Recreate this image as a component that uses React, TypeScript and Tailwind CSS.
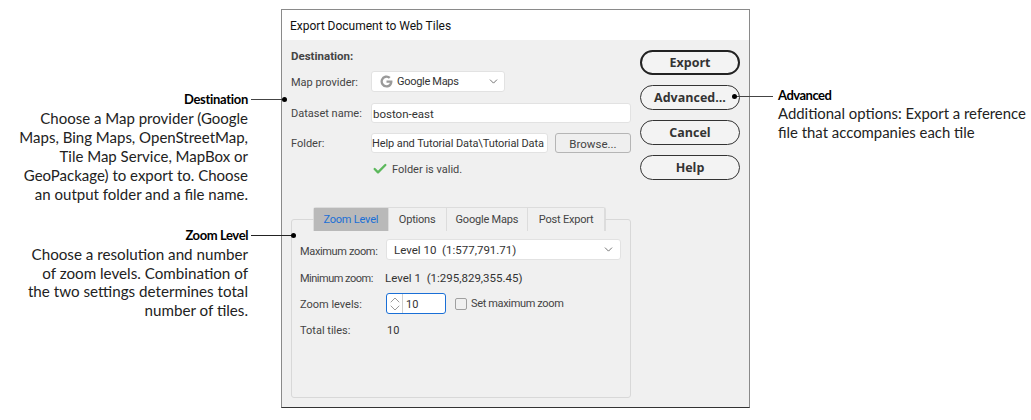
import { Check, ChevronDown, ChevronUp } from "lucide-react";

const dialogFont = "font-['Roboto',sans-serif]";

function Row({ label, className, children }: { label: string; className: string; children: React.ReactNode }) {
  return (
    <div className={`flex items-center ${className}`}>
      <span className="w-[81px] shrink-0 pt-[3px] text-[#444]">{label}</span>
      {children}
    </div>
  );
}

function DarkButton({ label, primary }: { label: string; primary?: boolean }) {
  return (
    <button
      className={`flex h-[25px] w-[100px] items-center justify-center rounded-full bg-[#f3f3f3] pt-px font-['Open_Sans',sans-serif] text-[12.5px] font-bold text-[#333] ${
        primary ? "border-2 border-[#222]" : "border border-[#333]"
      }`}
    >
      {label}
    </button>
  );
}

function Tab({ label, width, active }: { label: string; width: string; active?: boolean }) {
  return (
    <div
      className={`flex h-full items-center justify-center border-r border-[#dcdcdc] pt-[2px] tracking-[-0.2px] ${width} ${
        active ? "bg-[#b9b9b9] text-[#1a6fd6]" : "bg-[#f0f0f0] text-[#444]"
      }`}
    >
      {label}
    </div>
  );
}

function GoogleG() {
  return (
    <svg viewBox="0 0 24 24" className="h-[13px] w-[13px]">
      <path fill="#9a9a9a" d="M12 10v4.400h6.200c-.6 2.600-3 4.400-6.200 4.400a6.800 6.800 0 1 1 4.400-12l3.200-3.200A11.200 11.200 0 1 0 12 23.200c6.200 0 11-4.300 11-11.200 0-.7-.1-1.400-.2-2z" />
    </svg>
  );
}

export default function App() {
  return (
    <div className="relative flex h-[420px] w-[1031px] overflow-hidden bg-white font-['Lato',sans-serif] text-[#222]">
      <div className="w-[281px] shrink-0 pr-[33px] text-right text-[15px] leading-[19px]">
        <div className="mt-[90px] text-[13px] font-bold tracking-[-0.3px] text-black">Destination</div>
        <p>
          Choose a Map provider (Google
          <br />
          Maps, Bing Maps, OpenStreetMap,
          <br />
          Tile Map Service, MapBox or
          <br />
          GeoPackage) to export to. Choose
          <br />
          an output folder and a file name.
        </p>
        <div className="mt-[22px] text-[13px] font-bold tracking-[-0.4px] text-black">Zoom Level</div>
        <p className="text-[15.2px] leading-[18.7px]">
          Choose a resolution and number
          <br />
          of zoom levels. Combination of
          <br />
          the two settings determines total
          <br />
          number of tiles.
        </p>
      </div>

      <div className={`mt-[9px] flex h-[399px] w-[469px] shrink-0 flex-col border border-[#8a8a8a] border-b-[#333] text-[11px] ${dialogFont}`}>
        <div className="flex h-[30px] items-center bg-white pl-[8px] pt-px text-[12px] text-[#111]">Export Document to Web Tiles</div>
        <div className="flex flex-1 bg-[#f0f0f0]">
          <div className="w-[349px] shrink-0 pl-[9px]">
            <div className="mt-[9px] text-[11.5px] font-bold leading-[14px] text-[#444]">Destination:</div>
            <Row label="Map provider:" className="mt-[8px] h-[21px]">
              <div className="-ml-px flex h-full w-[134px] items-center rounded-[3px] border border-[#e2e2e2] bg-white pl-[8px] pr-[4px] text-[#333]">
                <GoogleG />
                <span className="ml-[4px] flex-1 pt-px tracking-[-0.3px]">Google Maps</span>
                <ChevronDown size={13} strokeWidth={1.5} className="text-[#555]" />
              </div>
            </Row>
            <Row label="Dataset name:" className="mt-[11px] h-[20px]">
              <div className="-ml-px flex h-full w-[260px] items-center rounded-[3px] border border-[#e2e2e2] bg-white pl-[1px] pt-[3px] text-[11.5px] text-[#333]">boston-east</div>
            </Row>
            <Row label="Folder:" className="mt-[10px] h-[20px]">
              <div className="-ml-px flex h-full w-[177px] items-center overflow-hidden whitespace-nowrap rounded-[3px] border border-[#e2e2e2] bg-white pt-[3px] tracking-[-0.1px] text-[#333]">
                Help and Tutorial Data\Tutorial Data
              </div>
              <button className="ml-[7px] flex h-full w-[76px] items-center justify-center rounded-[3px] border border-[#b5b5b5] bg-[#efefef] pt-[3px] text-[11.5px] text-[#444]">Browse...</button>
            </Row>
            <div className="mt-[6px] flex h-[20px] items-center pl-[81px] text-[#444]">
              <Check size={16} strokeWidth={3.5} className="text-[#5cb85c]" />
              <span className="ml-[4px] pt-[2px]">Folder is valid.</span>
            </div>

            <div className="mt-[28px] ml-[22px] flex h-[24px] w-[293px] rounded-t-[3px] border border-b-0 border-[#dcdcdc]">
              <Tab label="Zoom Level" width="w-[75px]" active />
              <Tab label="Options" width="w-[58px]" />
              <Tab label="Google Maps" width="w-[82px]" />
              <Tab label="Post Export" width="w-[77px]" />
            </div>
            <div className="-mt-[12px] h-[179px] w-[340px] rounded-[3px] border border-[#d8d8d8] pl-[8px] pt-[19px] text-[#444]">
              <div className="flex h-[21px] items-center">
                <span className="w-[86px] shrink-0 pt-[5px] tracking-[-0.35px]">Maximum zoom:</span>
                <div className="flex h-full w-[235px] items-center rounded-[3px] border border-[#e2e2e2] bg-white pl-[7px] pr-[5px] text-[11.5px] text-[#333]">
                  <span className="flex-1 whitespace-pre pt-[3px]">Level 10  (1:577,791.71)</span>
                  <ChevronDown size={13} strokeWidth={1.5} className="text-[#555]" />
                </div>
              </div>
              <div className="mt-[8px] flex h-[20px] items-center">
                <span className="w-[85px] shrink-0 pt-[2px] tracking-[-0.5px]">Minimum zoom:</span>
                <span className="whitespace-pre pt-[2px] text-[11.5px] text-[#333]">Level 1  (1:295,829,355.45)</span>
              </div>
              <div className="mt-[5px] flex h-[21px] items-center">
                <span className="w-[86px] shrink-0 pt-[3px]">Zoom levels:</span>
                <div className="flex h-full w-[60px] items-center rounded-[3px] border border-[#1a6fd6] bg-white">
                  <div className="flex h-full w-[16px] flex-col items-center justify-center border-r border-[#cfcfcf] text-[#666]">
                    <ChevronUp size={16} strokeWidth={1} className="-my-[4px]" />
                    <ChevronDown size={16} strokeWidth={1} className="-my-[4px]" />
                  </div>
                  <span className="pl-[3px] pt-[3px] text-[#333]">10</span>
                </div>
                <div className="ml-[9px] h-[12px] w-[12px] rounded-[2px] border border-[#a0a0a0] bg-[#f0f0f0]" />
                <span className="ml-[4px] pt-[2px] tracking-[-0.35px]">Set maximum zoom</span>
              </div>
              <div className="mt-[6px] flex h-[20px] items-center">
                <span className="w-[87px] shrink-0 pt-[2px]">Total tiles:</span>
                <span className="pt-[2px] text-[#333]">10</span>
              </div>
            </div>
          </div>
          <div className="flex flex-col gap-[10px] pl-[9px] pt-[10px]">
            <DarkButton label="Export" primary />
            <DarkButton label="Advanced..." />
            <DarkButton label="Cancel" />
            <DarkButton label="Help" />
          </div>
        </div>
      </div>

      <div className="shrink-0 whitespace-nowrap pl-[28px] pt-[86px] text-[14.9px] leading-[19.5px]">
        <div className="text-[13px] font-bold tracking-[-0.5px] text-black">Advanced</div>
        <p className="-mt-[2px]">
          Additional options: Export a reference
          <br />
          file that accompanies each tile
        </p>
      </div>

      {/* leader lines */}
      <div className="absolute left-[251px] top-[99px] h-px w-[34px] bg-[#444]" />
      <div className="absolute left-[282px] top-[97px] h-[5px] w-[5px] rounded-full bg-black" />
      <div className="absolute left-[251px] top-[235px] h-px w-[42px] bg-[#222]" />
      <div className="absolute left-[291px] top-[233px] h-[5px] w-[5px] rounded-full bg-black" />
      <div className="absolute left-[734px] top-[96px] h-px w-[39px] bg-[#444]" />
      <div className="absolute left-[732px] top-[94px] h-[5px] w-[5px] rounded-full bg-black" />
    </div>
  );
}
